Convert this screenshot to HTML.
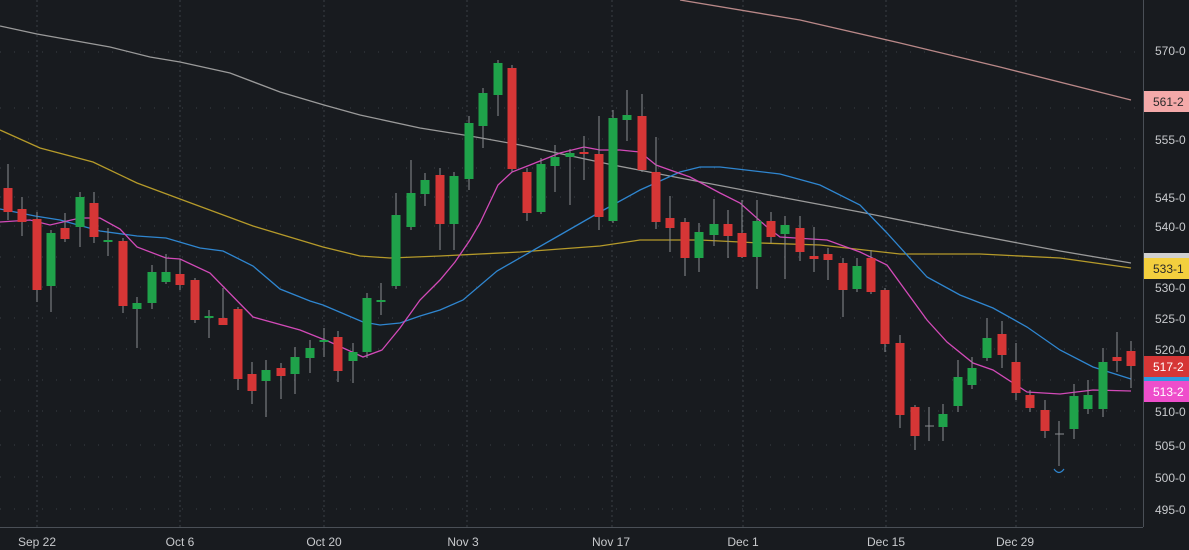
<!DOCTYPE html>
<html><head><meta charset="utf-8"><style>
html,body{margin:0;padding:0;background:#181b1f;width:1189px;height:550px;overflow:hidden}
svg{display:block}
text{font-family:"Liberation Sans",sans-serif;font-size:12px}
</style></head><body>
<svg width="1189" height="550" viewBox="0 0 1189 550" xmlns="http://www.w3.org/2000/svg">
<rect width="1189" height="550" fill="#181b1f"/>
<g stroke="#3a3f46" stroke-width="1" stroke-dasharray="1,13">
<line x1="0" y1="52" x2="1143" y2="52"/><line x1="0" y1="108" x2="1143" y2="108"/><line x1="0" y1="139" x2="1143" y2="139"/><line x1="0" y1="168" x2="1143" y2="168"/><line x1="0" y1="197" x2="1143" y2="197"/><line x1="0" y1="226" x2="1143" y2="226"/><line x1="0" y1="257" x2="1143" y2="257"/><line x1="0" y1="287" x2="1143" y2="287"/><line x1="0" y1="318" x2="1143" y2="318"/><line x1="0" y1="349" x2="1143" y2="349"/><line x1="0" y1="380" x2="1143" y2="380"/><line x1="0" y1="411" x2="1143" y2="411"/><line x1="0" y1="445" x2="1143" y2="445"/><line x1="0" y1="477" x2="1143" y2="477"/><line x1="0" y1="509" x2="1143" y2="509"/>
</g>
<g stroke="#3a3f46" stroke-width="1" stroke-dasharray="2,3">
<line x1="37" y1="0" x2="37" y2="527"/><line x1="180" y1="0" x2="180" y2="527"/><line x1="324" y1="0" x2="324" y2="527"/><line x1="467" y1="0" x2="467" y2="527"/><line x1="612" y1="0" x2="612" y2="527"/><line x1="743" y1="0" x2="743" y2="527"/><line x1="886" y1="0" x2="886" y2="527"/><line x1="1016" y1="0" x2="1016" y2="527"/>
</g>
<line x1="1143.5" y1="0" x2="1143.5" y2="527" stroke="#4a4f56"/>
<line x1="0" y1="527.5" x2="1143" y2="527.5" stroke="#4a4f56"/>
<g fill="none" stroke-width="1.3">
<polyline stroke="#b98888" points="680,0 800,20 900,43 1000,67 1131,100"/>
<polyline stroke="#9a9a9a" points="0,26 37,34 110,47 150,57 180,62 230,73 280,92 324,105 360,115 420,128 470,136 520,145 613,165 680,178 780,197 860,212 960,232 1060,251 1131,263"/>
<polyline stroke="#b59a2a" points="0,130 40,148 93,162 137,183 180,199 253,226 323,247 360,256 390,258 440,256 520,252 600,246 640,240 700,240 760,243 820,245 900,254 980,254 1060,258 1131,268"/>
<polyline stroke="#2f86d0" points="0,209 35,216 60,220 100,231 137,236 166,238 200,248 223,251 253,266 280,289 310,301 323,305 363,322 380,325 400,323 420,316 440,310 463,300 497,271 560,235 600,212 640,190 680,172 700,167 720,167 780,174 820,185 860,205 887,233 927,277 960,295 993,308 1027,327 1060,350 1093,367 1131,379"/>
<polyline stroke="#d24ab8" points="0,222 30,220 50,225 80,218 100,218 120,229 137,247 166,258 180,259 210,273 253,317 300,330 330,342 363,357 382,350 400,328 420,300 440,280 455,262 470,240 480,223 498,185 512,172 530,165 560,153 584,147 600,150 620,150 640,152 656,165 670,170 690,177 720,193 740,203 767,227 780,237 827,240 860,252 887,265 927,320 947,342 973,363 993,370 1027,392 1060,394 1093,390 1131,391"/>
</g>
<g stroke="#8a8d91" stroke-width="1">
<line x1="8" y1="164" x2="8" y2="220"/><line x1="22" y1="197" x2="22" y2="236"/><line x1="37" y1="212" x2="37" y2="302"/><line x1="51" y1="230" x2="51" y2="312"/><line x1="65" y1="213" x2="65" y2="242"/><line x1="80" y1="192" x2="80" y2="247"/><line x1="94" y1="192" x2="94" y2="243"/><line x1="108" y1="228" x2="108" y2="256"/><line x1="123" y1="238" x2="123" y2="313"/><line x1="137" y1="297" x2="137" y2="348"/><line x1="152" y1="265" x2="152" y2="309"/><line x1="166" y1="254" x2="166" y2="284"/><line x1="180" y1="259" x2="180" y2="290"/><line x1="195" y1="278" x2="195" y2="323"/><line x1="209" y1="310" x2="209" y2="338"/><line x1="223" y1="288" x2="223" y2="325"/><line x1="238" y1="307" x2="238" y2="390"/><line x1="252" y1="362" x2="252" y2="404"/><line x1="266" y1="360" x2="266" y2="417"/><line x1="281" y1="363" x2="281" y2="399"/><line x1="295" y1="347" x2="295" y2="394"/><line x1="310" y1="340" x2="310" y2="373"/><line x1="324" y1="328" x2="324" y2="357"/><line x1="338" y1="331" x2="338" y2="382"/><line x1="353" y1="343" x2="353" y2="383"/><line x1="367" y1="293" x2="367" y2="358"/><line x1="381" y1="283" x2="381" y2="315"/><line x1="396" y1="193" x2="396" y2="289"/><line x1="411" y1="160" x2="411" y2="230"/><line x1="425" y1="173" x2="425" y2="206"/><line x1="440" y1="168" x2="440" y2="250"/><line x1="454" y1="172" x2="454" y2="250"/><line x1="469" y1="116" x2="469" y2="190"/><line x1="483" y1="88" x2="483" y2="148"/><line x1="498" y1="60" x2="498" y2="116"/><line x1="512" y1="65" x2="512" y2="172"/><line x1="527" y1="168" x2="527" y2="221"/><line x1="541" y1="158" x2="541" y2="214"/><line x1="555" y1="145" x2="555" y2="192"/><line x1="570" y1="149" x2="570" y2="205"/><line x1="584" y1="136" x2="584" y2="180"/><line x1="599" y1="116" x2="599" y2="230"/><line x1="613" y1="110" x2="613" y2="223"/><line x1="627" y1="90" x2="627" y2="141"/><line x1="642" y1="94" x2="642" y2="172"/><line x1="656" y1="137" x2="656" y2="229"/><line x1="670" y1="196" x2="670" y2="252"/><line x1="685" y1="218" x2="685" y2="276"/><line x1="699" y1="223" x2="699" y2="272"/><line x1="714" y1="199" x2="714" y2="246"/><line x1="728" y1="210" x2="728" y2="258"/><line x1="742" y1="200" x2="742" y2="258"/><line x1="757" y1="200" x2="757" y2="289"/><line x1="771" y1="212" x2="771" y2="243"/><line x1="785" y1="216" x2="785" y2="279"/><line x1="800" y1="216" x2="800" y2="261"/><line x1="814" y1="227" x2="814" y2="272"/><line x1="828" y1="248" x2="828" y2="280"/><line x1="843" y1="258" x2="843" y2="317"/><line x1="857" y1="258" x2="857" y2="292"/><line x1="871" y1="250" x2="871" y2="294"/><line x1="885" y1="288" x2="885" y2="352"/><line x1="900" y1="335" x2="900" y2="428"/><line x1="915" y1="405" x2="915" y2="450"/><line x1="929" y1="407" x2="929" y2="441"/><line x1="943" y1="404" x2="943" y2="441"/><line x1="958" y1="360" x2="958" y2="412"/><line x1="972" y1="357" x2="972" y2="389"/><line x1="987" y1="318" x2="987" y2="361"/><line x1="1002" y1="321" x2="1002" y2="368"/><line x1="1016" y1="343" x2="1016" y2="400"/><line x1="1030" y1="390" x2="1030" y2="412"/><line x1="1045" y1="400" x2="1045" y2="438"/><line x1="1059" y1="421" x2="1059" y2="466"/><line x1="1074" y1="384" x2="1074" y2="439"/><line x1="1088" y1="380" x2="1088" y2="414"/><line x1="1103" y1="348" x2="1103" y2="417"/><line x1="1117" y1="332" x2="1117" y2="372"/><line x1="1131" y1="341" x2="1131" y2="388"/>
<line x1="925" y1="426" x2="934" y2="426"/><line x1="1055" y1="434" x2="1064" y2="434"/>
</g>
<g fill="#d63636">
<rect x="3.5" y="188" width="9" height="24"/><rect x="17.5" y="209" width="9" height="13"/><rect x="32.5" y="219" width="9" height="71"/><rect x="60.5" y="228" width="9" height="11"/><rect x="89.5" y="203" width="9" height="34"/><rect x="118.5" y="241" width="9" height="65"/><rect x="175.5" y="274" width="9" height="11"/><rect x="190.5" y="280" width="9" height="40"/><rect x="218.5" y="318" width="9" height="7"/><rect x="233.5" y="309" width="9" height="70"/><rect x="247.5" y="374" width="9" height="17"/><rect x="276.5" y="368" width="9" height="8"/><rect x="333.5" y="337" width="9" height="34"/><rect x="435.5" y="175" width="9" height="49"/><rect x="507.5" y="68" width="9" height="101"/><rect x="522.5" y="172" width="9" height="41"/><rect x="579.5" y="152" width="9" height="2"/><rect x="594.5" y="154" width="9" height="63"/><rect x="637.5" y="116" width="9" height="54"/><rect x="651.5" y="172" width="9" height="50"/><rect x="665.5" y="218" width="9" height="10"/><rect x="680.5" y="222" width="9" height="36"/><rect x="723.5" y="224" width="9" height="12"/><rect x="737.5" y="233" width="9" height="24"/><rect x="766.5" y="221" width="9" height="16"/><rect x="795.5" y="228" width="9" height="24"/><rect x="809.5" y="256" width="9" height="3"/><rect x="823.5" y="254" width="9" height="6"/><rect x="838.5" y="263" width="9" height="27"/><rect x="866.5" y="258" width="9" height="34"/><rect x="880.5" y="290" width="9" height="54"/><rect x="895.5" y="343" width="9" height="72"/><rect x="910.5" y="407" width="9" height="29"/><rect x="997.5" y="334" width="9" height="21"/><rect x="1011.5" y="362" width="9" height="31"/><rect x="1025.5" y="395" width="9" height="13"/><rect x="1040.5" y="410" width="9" height="21"/><rect x="1112.5" y="357" width="9" height="4"/><rect x="1126.5" y="351" width="9" height="15"/>
</g>
<g fill="#1fa24a">
<rect x="46.5" y="233" width="9" height="53"/><rect x="75.5" y="197" width="9" height="30"/><rect x="103.5" y="240" width="9" height="2"/><rect x="132.5" y="303" width="9" height="6"/><rect x="147.5" y="272" width="9" height="31"/><rect x="161.5" y="272" width="9" height="10"/><rect x="204.5" y="316" width="9" height="2"/><rect x="261.5" y="370" width="9" height="11"/><rect x="290.5" y="357" width="9" height="17"/><rect x="305.5" y="348" width="9" height="10"/><rect x="319.5" y="340" width="9" height="2"/><rect x="348.5" y="352" width="9" height="9"/><rect x="362.5" y="298" width="9" height="54"/><rect x="376.5" y="300" width="9" height="2"/><rect x="391.5" y="215" width="9" height="71"/><rect x="406.5" y="193" width="9" height="34"/><rect x="420.5" y="180" width="9" height="14"/><rect x="449.5" y="176" width="9" height="48"/><rect x="464.5" y="123" width="9" height="56"/><rect x="478.5" y="93" width="9" height="33"/><rect x="493.5" y="63" width="9" height="32"/><rect x="536.5" y="164" width="9" height="48"/><rect x="550.5" y="157" width="9" height="9"/><rect x="565.5" y="153" width="9" height="4"/><rect x="608.5" y="118" width="9" height="103"/><rect x="622.5" y="115" width="9" height="5"/><rect x="694.5" y="232" width="9" height="26"/><rect x="709.5" y="224" width="9" height="11"/><rect x="752.5" y="221" width="9" height="36"/><rect x="780.5" y="225" width="9" height="9"/><rect x="852.5" y="266" width="9" height="23"/><rect x="938.5" y="414" width="9" height="13"/><rect x="953.5" y="377" width="9" height="29"/><rect x="967.5" y="368" width="9" height="17"/><rect x="982.5" y="338" width="9" height="20"/><rect x="1069.5" y="396" width="9" height="33"/><rect x="1083.5" y="395" width="9" height="14"/><rect x="1098.5" y="362" width="9" height="47"/>
</g>
<path d="M1054,469 Q1059,476 1064,469" fill="none" stroke="#2f86d0" stroke-width="1.2"/>
<g fill="#c8cacd">
<text x="1155" y="55">570-0</text><text x="1155" y="144">555-0</text><text x="1155" y="202">545-0</text><text x="1155" y="231">540-0</text><text x="1155" y="292">530-0</text><text x="1155" y="323">525-0</text><text x="1155" y="354">520-0</text><text x="1155" y="416">510-0</text><text x="1155" y="450">505-0</text><text x="1155" y="482">500-0</text><text x="1155" y="514">495-0</text>
</g>
<rect x="1144" y="91" width="45" height="21" fill="#f4a9a9"/><text x="1153" y="106" fill="#2a2a2a">561-2</text>
<rect x="1144" y="253" width="45" height="6" fill="#d0d0d0"/>
<rect x="1144" y="258" width="45" height="21" fill="#f3cf3e"/><text x="1153" y="273" fill="#2a2a2a">533-1</text>
<rect x="1144" y="356" width="45" height="21" fill="#d63636"/><text x="1153" y="371" fill="#fff">517-2</text>
<rect x="1144" y="377" width="45" height="5" fill="#2f9ae0"/>
<rect x="1144" y="381" width="45" height="21" fill="#ee4ecb"/><text x="1153" y="396" fill="#fff">513-2</text>
<g fill="#c8cacd" font-size="12">
<text x="37" y="546" text-anchor="middle">Sep 22</text><text x="180" y="546" text-anchor="middle">Oct 6</text><text x="324" y="546" text-anchor="middle">Oct 20</text><text x="463" y="546" text-anchor="middle">Nov 3</text><text x="611" y="546" text-anchor="middle">Nov 17</text><text x="743" y="546" text-anchor="middle">Dec 1</text><text x="886" y="546" text-anchor="middle">Dec 15</text><text x="1015" y="546" text-anchor="middle">Dec 29</text>
</g>
</svg>
</body></html>
